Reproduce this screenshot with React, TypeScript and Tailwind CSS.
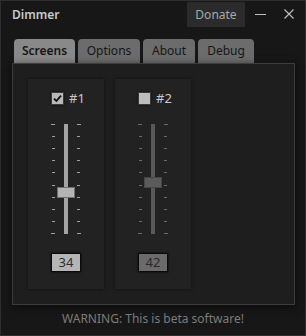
import React from "react";

const font = { fontFamily: '"Noto Sans", "Open Sans", sans-serif' };

function Ticks({ active, side }: { active: boolean; side: "l" | "r" }) {
  const c = active ? "bg-[#a0a0a0]" : "bg-[#6a6a6a]";
  return (
    <div className={`flex flex-col justify-between h-full w-[4px] ${side === "l" ? "items-end" : "items-start"}`}>
      {Array.from({ length: 10 }).map((_, i) => (
        <div key={i} className={`h-[1px] ${i === 0 || i === 9 ? "w-[4px]" : "w-[3px]"} ${c}`} />
      ))}
    </div>
  );
}

function Card({ label, value, active, thumbTop }: { label: string; value: string; active: boolean; thumbTop: number }) {
  return (
    <div className="w-[76px] h-[210px] bg-[#222222] flex flex-col items-center shadow-[0_0_3px_rgba(0,0,0,0.5)]">
      <div className="flex items-center mt-[13px] h-[13px] gap-[5px] ml-[4px]">
        <div
          className={`w-[13px] h-[13px] border border-[#3a3a3a] flex items-center justify-center ${
            active ? "bg-[#b8b8b8]" : "bg-[#bdbdbd]"
          } shadow-[0_0_2px_rgba(0,0,0,0.8)]`}
        >
          {active && (
            <svg width="11" height="11" viewBox="0 0 11 11">
              <path d="M2 5.6 L4.4 8 L9 2.6" stroke="#111" strokeWidth="1.8" fill="none" />
            </svg>
          )}
        </div>
        <span className="text-[13px] text-[#c8c8c8] leading-none" style={font}>
          {label}
        </span>
      </div>
      <div className="relative mt-[19px] h-[110px] w-[30px] flex">
        <Ticks active={active} side="l" />
        <div className="ml-[9px] w-[4px] h-full">
          <div className={`w-[4px] h-full ${active ? "bg-[#a3a3a3]" : "bg-[#595959]"}`} />
        </div>
        <div className="ml-[9px] h-full">
          <Ticks active={active} side="r" />
        </div>
        <div
          className={`absolute left-[6px] w-[18px] h-[11px] border ${
            active ? "bg-[#b3b3b3] border-[#6f6f6f]" : "bg-[#5b5b5b] border-[#464646]"
          }`}
          style={{ top: thumbTop }}
        />
      </div>
      <div
        className={`mt-[19px] w-[30px] h-[19px] flex items-center justify-center border border-[#0a0a0a] shadow-[0_0_2px_rgba(0,0,0,0.9)] ${
          active ? "bg-[#b5b5b5] text-[#2e2e2e]" : "bg-[#6b6b6b] text-[#2a2a2a]"
        }`}
      >
        <span className="text-[13px] leading-none" style={font}>
          {value}
        </span>
      </div>
    </div>
  );
}

export default function App() {
  const tabs = [
    { name: "Screens", w: 61, active: true },
    { name: "Options", w: 62 },
    { name: "About", w: 52 },
    { name: "Debug", w: 56 },
  ];
  return (
    <div className="w-[306px] h-[336px] bg-[#171717] border border-[#2e2e2e] flex flex-col" style={font}>
      <div className="h-[28px] flex items-start">
        <div className="ml-[11px] mt-[8px] text-[12px] font-semibold text-[#c9c9c9] leading-none">Dimmer</div>
        <div className="ml-auto mt-[1px] w-[58px] h-[25px] bg-[#2b2b2b] flex items-center justify-center text-[12px] text-[#a9a9a9]">
          Donate
        </div>
        <div className="w-[30px] h-[26px] flex items-center justify-center">
          <div className="w-[11px] h-[1px] bg-[#c0c0c0]" />
        </div>
        <div className="w-[27px] h-[26px] mr-[3px] flex items-center justify-center">
          <svg width="10" height="10" viewBox="0 0 10 10">
            <path d="M0.5 0.5 L9.5 9.5 M9.5 0.5 L0.5 9.5" stroke="#c0c0c0" strokeWidth="1.1" />
          </svg>
        </div>
      </div>
      <div className="flex ml-[13px] mt-[10px] gap-[3px] h-[24px] items-end">
        {tabs.map((t) => (
          <div
            key={t.name}
            className={`h-[24px] rounded-t-[4px] flex items-center justify-center text-[12px] text-[#161616] ${
              t.active ? "bg-[#898989] font-semibold" : "bg-[#6c6c6c]"
            }`}
            style={{ width: t.w }}
          >
            {t.name}
          </div>
        ))}
      </div>
      <div className="ml-[11px] w-[283px] h-[242px] bg-[#1e1e1e] border border-[#3d3d3d] shadow-[0_2px_8px_rgba(0,0,0,0.6)] flex gap-[11px] pl-[15px] pt-[15px]">
        <Card label="#1" value="34" active thumbTop={63} />
        <Card label="#2" value="42" active={false} thumbTop={53} />
      </div>
      <div className="flex-1 flex items-center justify-center text-[12px] text-[#7b7b7b] pb-[2px]">
        WARNING: This is beta software!
      </div>
    </div>
  );
}
